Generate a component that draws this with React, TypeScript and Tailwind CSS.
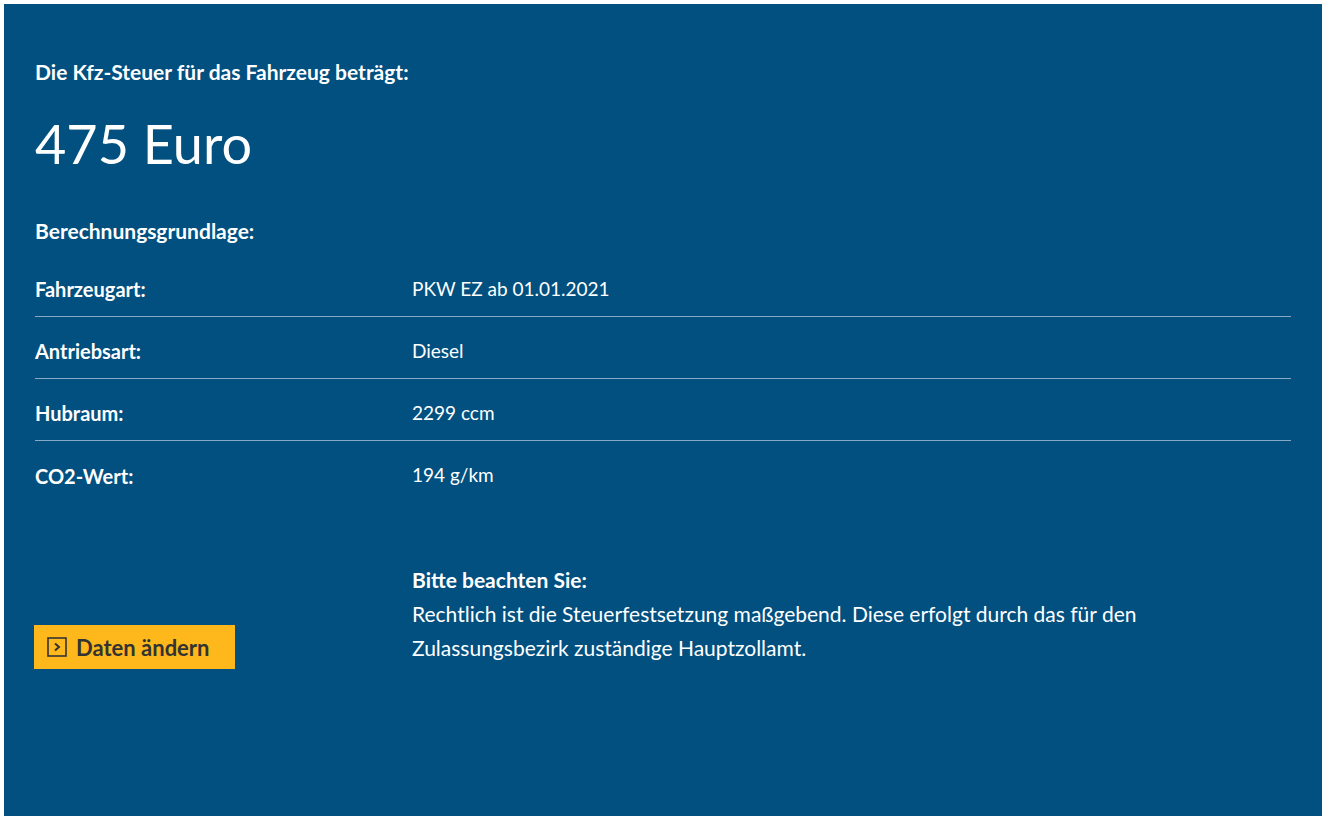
import React from 'react';

const rows = [
  { label: 'Fahrzeugart:', value: 'PKW EZ ab 01.01.2021' },
  { label: 'Antriebsart:', value: 'Diesel' },
  { label: 'Hubraum:', value: '2299 ccm' },
  { label: 'CO2-Wert:', value: '194 g/km' },
];

const App = () => {
  return (
    <div className="min-h-screen bg-white p-1 pr-[2px] pb-0" style={{ fontFamily: 'Lato, "Noto Sans", sans-serif' }}>
      <div className="min-h-[812px] bg-[#01507f] px-[31px] pt-[54px] text-white">
        <h2 className="text-[21px] font-bold leading-[28px]">Die Kfz-Steuer für das Fahrzeug beträgt:</h2>
        <p className="mt-[23px] text-[54px] leading-[70px]">475 Euro</p>

        <h3 className="mt-[38px] text-[21px] font-bold leading-[28px]">Berechnungsgrundlage:</h3>
        <div className="mt-[10px]">
          {rows.map((r, i) => (
            <div
              key={r.label}
              className={`grid grid-cols-[377px_1fr] items-center h-[62px] pt-[7px] ${i < rows.length - 1 ? 'border-b border-[#86aac6]' : ''}`}
            >
              <span className="text-[20px] font-bold">{r.label}</span>
              <span className="text-[19px]">{r.value}</span>
            </div>
          ))}
        </div>

        <div className="mt-[60px] grid grid-cols-[377px_1fr]">
          <div className="flex items-end">
            <button className="-mb-1 -ml-px flex h-[44px] w-[201px] items-center gap-[9px] bg-[#ffb81c] pl-[13px] text-[22px] font-bold text-[#333333]">
              <svg width="20" height="20" viewBox="0 0 20 20" fill="none" stroke="#333333" strokeWidth="1.6">
                <rect x="1" y="1" width="18" height="18" />
                <path d="M8 6.5l4 3.5-4 3.5" strokeWidth="2" />
              </svg>
              Daten ändern
            </button>
          </div>
          <div className="text-[21px] leading-[34px]">
            <p className="font-bold">Bitte beachten Sie:</p>
            <p className="max-w-[740px]">
              Rechtlich ist die Steuerfestsetzung maßgebend. Diese erfolgt durch das für den Zulassungsbezirk zuständige Hauptzollamt.
            </p>
          </div>
        </div>
      </div>
    </div>
  );
};

export default App;
